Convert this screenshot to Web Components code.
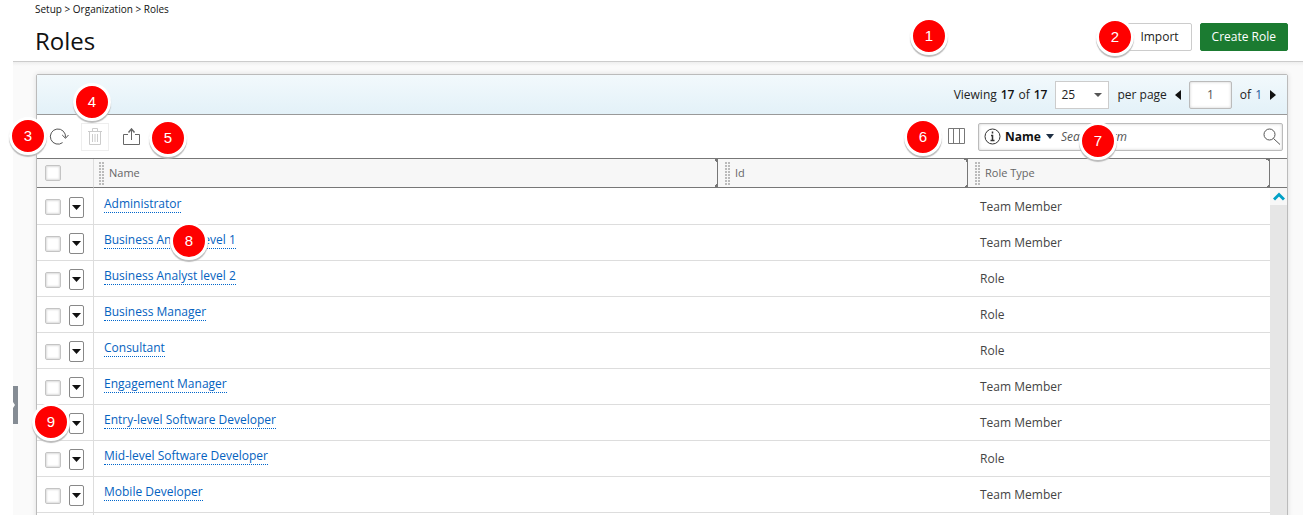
<!DOCTYPE html>
<html lang="en">
<head>
<meta charset="utf-8">
<title>Roles</title>
<style>
  html {
    background: #fff;
  }

  body {
    color: #444;
    font: 12px/18px "Open Sans", sans-serif;
    margin: 0;
  }
</style>
</head>
<body>
<roles-page>
  <page-header slot="header" heading="Roles">
    <action-button slot="actions">Import</action-button>
    <action-button slot="actions" primary>Create Role</action-button>
  </page-header>

  <pager-bar slot="panel"></pager-bar>
  <grid-toolbar slot="panel"></grid-toolbar>
  <roles-grid slot="panel"></roles-grid>

  <step-marker slot="marker" style="right: 355px; top: 17px">1</step-marker>
  <step-marker slot="marker" style="right: 169px; top: 18px">2</step-marker>
  <step-marker slot="marker" style="left: 9px; top: 117px">3</step-marker>
  <step-marker slot="marker" style="left: 73px; top: 83px">4</step-marker>
  <step-marker slot="marker" style="left: 149px; top: 119px">5</step-marker>
  <step-marker slot="marker" style="right: 361px; top: 118px">6</step-marker>
  <step-marker slot="marker" style="right: 186px; top: 122px">7</step-marker>
  <step-marker slot="marker" style="left: 170px; top: 222px">8</step-marker>
  <step-marker slot="marker" style="left: 32px; top: 403px">9</step-marker>
</roles-page>

<script>
  const sharedStyles = `
    :host, * {
      box-sizing: border-box;
    }

    button, input, select {
      color: inherit;
      font: inherit;
      margin: 0;
    }

    button {
      background: none;
      border: 0;
      display: inline-flex;
      align-items: center;
      justify-content: center;
      padding: 0;
    }

    svg {
      display: block;
    }
  `;

  class BaseElement extends HTMLElement {
    constructor() {
      super();

      this.shadow = this.attachShadow({ mode: 'open' });
    }

    connectedCallback() {
      this.shadow.innerHTML = `<style>${sharedStyles}${this.styles()}</style>${this.render()}`;
    }
  }

  customElements.define('roles-page', class extends BaseElement {
    styles() {
      return `
        :host {
          display: flex;
          flex-direction: column;
          height: 100vh;
          overflow: hidden;
          position: relative;
        }

        main {
          background: linear-gradient(#eee, #fafafa 4px);
          border-top: 1px solid #ccc;
          flex: 1;
          margin-left: 13px;
          min-height: 0;
          overflow: hidden;
          padding: 12px 15px 0 23px;
        }

        .panel {
          background: #fff;
          border: 1px solid #bbb;
          border-radius: 2px 2px 0 0;
          box-shadow: 0 0 5px #ddd;
        }

        .drawer {
          background: #858c94;
          height: 38px;
          justify-content: flex-start;
          left: 13px;
          position: absolute;
          top: 386px;
          width: 5px;
        }

        .drawer::before {
          border: solid transparent;
          border-left-color: #fff;
          border-width: 3px 0 3px 2px;
          content: "";
        }
      `;
    }

    render() {
      return `
        <slot name="header"></slot>
        <main>
          <div class="panel"><slot name="panel"></slot></div>
        </main>
        <button class="drawer" type="button" aria-label="Open side panel"></button>
        <slot name="marker"></slot>
      `;
    }
  });

  customElements.define('page-header', class extends BaseElement {
    styles() {
      return `
        :host {
          display: flex;
          align-items: flex-end;
          justify-content: space-between;
          height: 61px;
          padding: 0 15px 10px 35px;
        }

        nav {
          color: #111;
          font-size: 10px;
          line-height: 16px;
        }

        nav a {
          color: inherit;
          text-decoration: none;
        }

        h1 {
          color: #111;
          font-size: 24px;
          font-weight: 400;
          line-height: 32px;
          margin: 8px 0 -6px;
        }

        .actions {
          display: flex;
          gap: 8px;
        }
      `;
    }

    render() {
      return `
        <div>
          <nav><a href="#setup">Setup</a> &gt; <a href="#organization">Organization</a> &gt; <a href="#roles">Roles</a></nav>
          <h1>${this.getAttribute('heading')}</h1>
        </div>
        <div class="actions"><slot name="actions"></slot></div>
      `;
    }
  });

  customElements.define('action-button', class extends BaseElement {
    styles() {
      return `
        :host {
          display: block;
        }

        button {
          background: #fff;
          border: 1px solid #ccc;
          border-radius: 2px;
          color: #222;
          height: 28px;
          padding: 0 12px;
        }

        :host([primary]) button {
          background: #1b7b31;
          border-color: #1b7b31;
          color: #fff;
          padding: 0 11px;
        }
      `;
    }

    render() {
      return '<button type="button"><slot></slot></button>';
    }
  });

  customElements.define('pager-bar', class extends BaseElement {
    styles() {
      return `
        :host {
          display: flex;
          align-items: center;
          justify-content: flex-end;
          background: linear-gradient(#f2f9fc, #e3f1f8);
          border-bottom: 1px solid #999;
          color: #222;
          gap: 8px;
          height: 40px;
          padding-right: 11px;
        }

        b {
          color: #111;
          font-weight: 600;
        }

        .count {
          display: flex;
          gap: 4px;
        }

        .size {
          display: grid;
          align-items: center;
        }

        .size > * {
          grid-area: 1 / 1;
        }

        .size svg {
          justify-self: end;
          margin-right: 7px;
          pointer-events: none;
        }

        select {
          appearance: none;
          background: #fff;
          border: 1px solid #ccc;
          border-radius: 0;
          height: 28px;
          padding: 0 5px;
          width: 54px;
        }

        input {
          background: #fff;
          border: 1px solid #bbb;
          border-radius: 2px;
          box-shadow: inset 0 0 3px #ccc;
          color: #555;
          height: 28px;
          text-align: center;
          width: 43px;
        }

        a {
          color: #1f5b99;
          text-decoration: none;
        }
      `;
    }

    render() {
      return `
        <span class="count"><span>Viewing</span> <b>17</b> <span>of</span> <b>17</b></span>
        <span class="size">
          <select id="size" aria-label="Rows per page"><option>25</option><option>50</option></select>
          <svg width="8" height="4"><path d="M0 0h8l-4 4z" fill="#555"/></svg>
        </span>
        <label for="size">per page</label>
        <button type="button" aria-label="Previous page">
          <svg width="6" height="10"><path d="M6 0v10L0 5z" fill="#111"/></svg>
        </button>
        <input type="text" value="1" aria-label="Page">
        <span class="count"><span>of</span> <a href="#last">1</a></span>
        <button type="button" aria-label="Next page">
          <svg width="6" height="10"><path d="M0 0v10l6-5z" fill="#111"/></svg>
        </button>
      `;
    }
  });

  customElements.define('grid-toolbar', class extends BaseElement {
    styles() {
      return `
        :host {
          display: flex;
          align-items: center;
          justify-content: space-between;
          border-bottom: 1px solid #777;
          height: 44px;
          padding: 0 4px 0 8px;
        }

        .group {
          display: flex;
          align-items: center;
          gap: 8px;
        }

        .group button {
          height: 28px;
          width: 28px;
        }

        .group button:disabled {
          border: 1px solid #eee;
        }

        .search {
          display: flex;
          align-items: center;
          border: 1px solid #bbb;
          border-radius: 2px;
          box-shadow: inset 0 0 3px #ccc;
          height: 28px;
          padding: 0 1px 0 5px;
          width: 305px;
        }

        .group .field {
          color: #111;
          font-weight: 700;
          gap: 5px;
          margin: 0 7px 0 4px;
          width: auto;
        }

        input {
          background: none;
          border: 0;
          flex: 1;
          min-width: 0;
          outline: 0;
          padding: 0;
        }

        input::placeholder {
          color: #555;
          font-style: italic;
          opacity: 1;
        }
      `;
    }

    render() {
      return `
        <div class="group">
          <button type="button" aria-label="Refresh">
            <svg width="20" height="18" fill="none" stroke="#555"><path d="M13.6 14.6A7.6 7.6 0 1 1 16.5 9.5M13.2 7l3.3 3.3L19.5 7"/></svg>
          </button>
          <button type="button" aria-label="Delete" disabled>
            <svg width="16" height="17" fill="none" stroke="#ccc"><path d="M1 3.5h14M5.500 3.500v-3h5v3M2.500 3.500v13h11v-13M5.500 6v8M8 6v8M10.500 6v8"/></svg>
          </button>
          <button type="button" aria-label="Export">
            <svg width="17" height="17" fill="none" stroke="#666"><path d="M5 6.5H.5v10h16v-10H12M8.500 12V1"/><path d="M5.500 4.500l3-3.500 3 3.500" stroke-width="1.500"/></svg>
          </button>
        </div>
        <div class="group">
          <button type="button" aria-label="Columns">
            <svg width="17" height="17" fill="none" stroke="#777"><path d="M.5.5h16v15H.5zM5.500.5v15M11.500.5v15"/></svg>
          </button>
          <div class="search">
            <svg width="17" height="17" fill="none" stroke="#333"><circle cx="8.500" cy="8.500" r="7.500"/><path d="M8.500 3.500v2M7 7.500h1.500v5M6.500 12.500h4" stroke-width="1.500"/></svg>
            <button class="field" type="button">Name <svg width="8" height="5"><path d="M0 0h8L4 5z" fill="#1f2f44"/></svg></button>
            <input type="text" placeholder="Search Term" aria-label="Search">
            <svg width="18" height="18" fill="none" stroke="#555"><circle cx="6.500" cy="6.500" r="5.500"/><path d="M10.500 10.500l6.500 6"/></svg>
          </div>
        </div>
      `;
    }
  });

  const roles = [
    ['Administrator', 'Team Member'],
    ['Business Analyst level 1', 'Team Member'],
    ['Business Analyst level 2', 'Role'],
    ['Business Manager', 'Role'],
    ['Consultant', 'Role'],
    ['Engagement Manager', 'Team Member'],
    ['Entry-level Software Developer', 'Team Member'],
    ['Mid-level Software Developer', 'Role'],
    ['Mobile Developer', 'Team Member'],
  ];

  customElements.define('roles-grid', class extends BaseElement {
    styles() {
      return `
        :host {
          display: block;
        }

        table {
          border-collapse: separate;
          border-spacing: 0;
          table-layout: fixed;
          width: 100%;
        }

        .pick { width: 57px; }
        .id { width: 250px; }
        .type { width: 302px; }
        .scroll { width: 17px; }

        th {
          background: #f7f7f7;
          border-bottom: 1px solid #777;
          color: #666;
          font-size: 11px;
          font-weight: 400;
          height: 29px;
          padding: 0;
          text-align: left;
        }

        th:first-child {
          border-right: 1px solid #ddd;
          padding-left: 8px;
        }

        .head {
          display: flex;
          align-items: center;
          gap: 5px;
          height: 28px;
          padding-left: 5px;
          border-right: 1px solid #777;
          background:
            linear-gradient(45deg, transparent 50%, #777 50%) right top / 3px 3px no-repeat,
            linear-gradient(315deg, #777 50%, transparent 50%) right bottom / 3px 3px no-repeat;
        }

        .head.wide {
          padding-left: 7px;
        }

        .grip {
          background: repeating-linear-gradient(#f7f7f7 0 1px, transparent 1px 3px),
            linear-gradient(90deg, #bbb 2px, transparent 2px 3px, #bbb 3px);
          height: 24px;
          width: 5px;
        }

        td {
          border-bottom: 1px solid #ddd;
          height: 36px;
          padding: 0;
        }

        td:first-child {
          border-right: 1px solid #ddd;
          padding-left: 8px;
        }

        tbody tr:first-child td {
          height: 37px;
        }

        .controls {
          display: flex;
          align-items: center;
          gap: 8px;
          padding-top: 2px;
        }

        input {
          appearance: none;
          background: #fff;
          border: 1px solid #c4c4c4;
          border-radius: 2px;
          box-shadow: inset 0 0 2px 1px #ddd;
          display: block;
          height: 16px;
          width: 16px;
        }

        .menu {
          border: 1px solid #888;
          border-radius: 2px;
          height: 21px;
          width: 15px;
        }

        .name {
          padding: 0 10px 5px;
        }

        .name a {
          border-bottom: 1px dotted #06c;
          color: #0462c0;
          display: inline-block;
          line-height: 17px;
          text-decoration: none;
        }

        .kind {
          padding: 1px 12px 0;
        }

        tbody .bar {
          background: #e6e6e6;
          border: 0;
          vertical-align: top;
        }

        .bar button {
          background: #f7f7f7;
          height: 17px;
          width: 100%;
        }
      `;
    }

    render() {
      const rows = roles.map(([name, type], index) => `
        <tr>
          <td>
            <div class="controls">
              <input type="checkbox" aria-label="Select ${name}">
              <button class="menu" type="button" aria-label="Actions for ${name}">
                <svg width="9" height="5"><path d="M0 0h9L4.500 5z" fill="#111"/></svg>
              </button>
            </div>
          </td>
          <td class="name"><a href="#role-${index + 1}">${name}</a></td>
          <td></td>
          <td class="kind">${type}</td>
          ${index === 0 ? `
            <td class="bar" rowspan="${roles.length + 1}">
              <button type="button" aria-label="Scroll up">
                <svg width="12" height="9" fill="none" stroke="#00a0c6" stroke-width="3"><path d="M1 7.5l5-5 5 5"/></svg>
              </button>
            </td>` : ''}
        </tr>
      `).join('');

      return `
        <table>
          <colgroup><col class="pick"><col><col class="id"><col class="type"><col class="scroll"></colgroup>
          <thead>
            <tr>
              <th><input type="checkbox" aria-label="Select all"></th>
              <th><div class="head"><span class="grip"></span>Name</div></th>
              <th><div class="head wide"><span class="grip"></span>Id</div></th>
              <th><div class="head wide"><span class="grip"></span>Role Type</div></th>
              <th></th>
            </tr>
          </thead>
          <tbody>
            ${rows}
            <tr><td></td><td></td><td></td><td></td></tr>
          </tbody>
        </table>
      `;
    }
  });

  customElements.define('step-marker', class extends BaseElement {
    styles() {
      return `
        :host {
          display: flex;
          align-items: center;
          justify-content: center;
          background: #f00;
          border: 3px solid #fff;
          border-radius: 50%;
          box-shadow: 0 2px 1px #bbb;
          color: #fff;
          font: 15px/18px "Liberation Sans", sans-serif;
          height: 38px;
          position: absolute;
          width: 38px;
        }
      `;
    }

    render() {
      return '<slot></slot>';
    }
  });
</script>
</body>
</html>
